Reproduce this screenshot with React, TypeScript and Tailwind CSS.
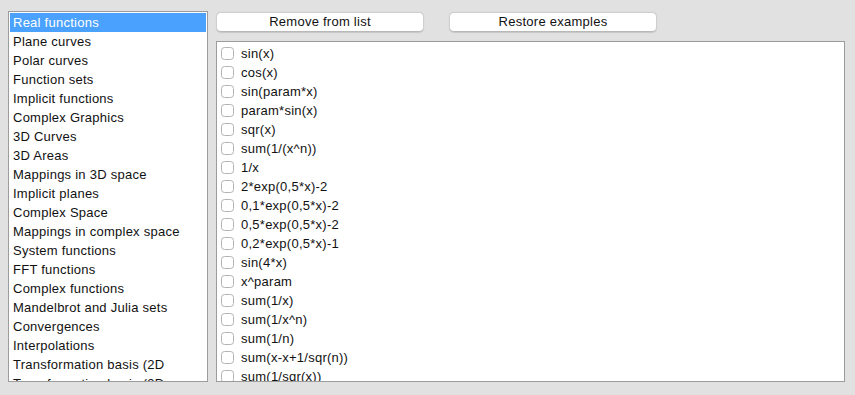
import { useState } from "react";

const categories = [
  "Real functions",
  "Plane curves",
  "Polar curves",
  "Function sets",
  "Implicit functions",
  "Complex Graphics",
  "3D Curves",
  "3D Areas",
  "Mappings in 3D space",
  "Implicit planes",
  "Complex Space",
  "Mappings in complex space",
  "System functions",
  "FFT functions",
  "Complex functions",
  "Mandelbrot and Julia sets",
  "Convergences",
  "Interpolations",
  "Transformation basis (2D",
  "Transformation basis (3D",
];

const examples = [
  "sin(x)",
  "cos(x)",
  "sin(param*x)",
  "param*sin(x)",
  "sqr(x)",
  "sum(1/(x^n))",
  "1/x",
  "2*exp(0,5*x)-2",
  "0,1*exp(0,5*x)-2",
  "0,5*exp(0,5*x)-2",
  "0,2*exp(0,5*x)-1",
  "sin(4*x)",
  "x^param",
  "sum(1/x)",
  "sum(1/x^n)",
  "sum(1/n)",
  "sum(x-x+1/sqr(n))",
  "sum(1/sqr(x))",
];

export default function App() {
  const [selected, setSelected] = useState(0);
  const [checked, setChecked] = useState<Record<number, boolean>>({});

  return (
    <div
      className="w-[855px] h-[395px] bg-[#e1e1e1] flex gap-[8px] pl-[8px] pt-[11px] text-[13px] tracking-[0.25px] text-[#111] overflow-hidden"
      style={{ fontFamily: '"Liberation Sans", Arial, sans-serif' }}
    >
      {/* category list */}
      <div className="w-[200px] h-[371px] shrink-0 border border-[#9c9c9c] bg-white p-px overflow-hidden">
        {categories.map((c, i) => (
          <div
            key={c}
            onClick={() => setSelected(i)}
            className={
              "h-[19px] leading-[19px] px-[3px] whitespace-nowrap cursor-default " +
              (i === selected ? "bg-[#4ba2fe] text-white" : "")
            }
          >
            {c}
          </div>
        ))}
      </div>

      <div className="w-[629px] flex flex-col">
        <div className="flex gap-[25px] mt-px">
          <button className="w-[208px] h-[20px] bg-white rounded-[5px] border border-[#cfcfcf] border-b-[#b8b8b8] shadow-[0_0.5px_1px_rgba(0,0,0,0.12)] leading-[18px] text-center">
            Remove from list
          </button>
          <button className="w-[208px] h-[20px] bg-white rounded-[5px] border border-[#cfcfcf] border-b-[#b8b8b8] shadow-[0_0.5px_1px_rgba(0,0,0,0.12)] leading-[18px] text-center">
            Restore examples
          </button>
        </div>

        {/* examples list */}
        <div className="mt-[9px] h-[341px] border border-[#9c9c9c] bg-white pt-[1.5px] pl-[4px] overflow-hidden">
          {examples.map((e, i) => (
            <label key={e} className="flex items-center gap-[7px] h-[19px] cursor-default">
              <span
                onClick={() => setChecked({ ...checked, [i]: !checked[i] })}
                className={
                  "w-[13px] h-[13px] rounded-[3.5px] border shrink-0 " +
                  (checked[i] ? "bg-[#4ba2fe] border-[#4ba2fe]" : "bg-white border-[#b3b3b3]")
                }
              />
              <span className="leading-[19px] whitespace-nowrap">{e}</span>
            </label>
          ))}
        </div>
      </div>
    </div>
  );
}
